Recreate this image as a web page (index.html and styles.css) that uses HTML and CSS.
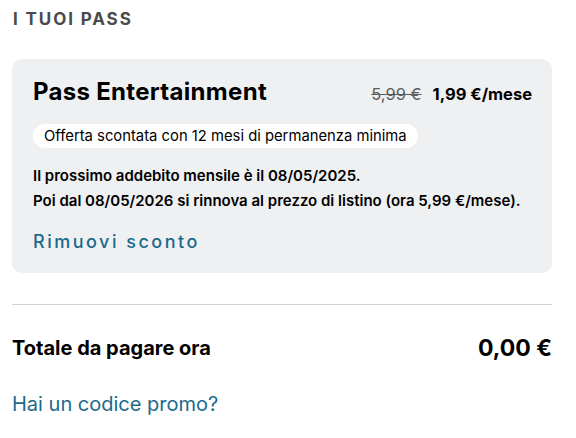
FILE: index.html
```html
<!DOCTYPE html>
<html lang="it">
<head>
<meta charset="utf-8">
<link rel="stylesheet" href="styles.css">
</head>
<body>
<main class="page">
  <h2 class="section-title">I TUOI PASS</h2>
  <section class="card">
    <div class="card-head">
      <h3 class="pass-name">Pass Entertainment</h3>
      <div class="price">
        <span class="old-price">5,99 €</span>
        <span class="new-price">1,99 €/mese</span>
      </div>
    </div>
    <span class="pill">Offerta scontata con 12 mesi di permanenza minima</span>
    <p class="info">Il prossimo addebito mensile è il 08/05/2025.<br>Poi dal 08/05/2026 si rinnova al prezzo di listino (ora 5,99 €/mese).</p>
    <a class="remove" href="#">Rimuovi sconto</a>
  </section>
  <hr class="divider">
  <div class="total">
    <span class="total-label">Totale da pagare ora</span>
    <span class="total-value">0,00 €</span>
  </div>
  <a class="promo" href="#">Hai un codice promo?</a>
</main>
</body>
</html>
```
FILE: styles.css
```css
* { box-sizing: border-box; }
html, body { margin: 0; padding: 0; background: #fff; }
body {
  font-family: Inter, "Noto Sans", sans-serif;
  color: #000;
  width: 576px;
  height: 438px;
  overflow: hidden;
}
.page {
  padding: 9px 24px 0 12px;
  display: flex;
  flex-direction: column;
}
.section-title {
  margin: 0 0 0 1px;
  font-size: 17px;
  font-weight: 700;
  letter-spacing: 1.9px;
  color: #4a4a4a;
  line-height: 20px;
}
.card {
  margin-top: 30px;
  background: #eff0f2;
  border-radius: 10px;
  padding: 18px 20px 20px 21px;
  display: flex;
  flex-direction: column;
  align-items: flex-start;
  height: 214px;
}
.card-head {
  align-self: stretch;
  display: flex;
  justify-content: space-between;
  align-items: baseline;
}
.pass-name {
  margin: 0;
  font-size: 24px;
  font-weight: 700;
  letter-spacing: 0.3px;
  line-height: 30px;
}
.price { display: flex; gap: 11px; align-items: baseline; }
.old-price {
  font-size: 16.5px;
  color: #5c5c5c;
  text-decoration: line-through;
}
.new-price {
  font-size: 16.5px;
  font-weight: 700;
}
.pill {
  margin-top: 17px;
  background: #fff;
  border-radius: 12px;
  height: 24px;
  line-height: 24px;
  padding: 0 11px;
  font-size: 14.8px;
}
.info {
  margin: 15px 0 0;
  font-size: 15px;
  font-weight: 600;
  line-height: 25px;
}
.remove {
  margin-top: 17px;
  color: #1b6a8c;
  font-size: 18px;
  font-weight: 500;
  letter-spacing: 2.5px;
  text-decoration: none;
  line-height: 24px;
}
.divider {
  margin: 31px 0 0;
  border: 0;
  border-top: 1px solid #d3d3d3;
  height: 0;
}
.total {
  margin-top: 28px;
  display: flex;
  justify-content: space-between;
  align-items: center;
  line-height: 30px;
}
.total-label { font-size: 20px; font-weight: 700; }
.total-value { font-size: 23px; font-weight: 700; }
.promo {
  margin-top: 29px;
  font-size: 20px;
  color: #1b6a8c;
  text-decoration: none;
  line-height: 24px;
  align-self: flex-start;
}
```
